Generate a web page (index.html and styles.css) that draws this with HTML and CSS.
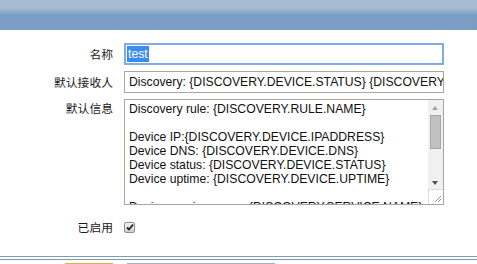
FILE: index.html
```html
<!DOCTYPE html>
<html>
<head>
<meta charset="utf-8">
<link rel="stylesheet" href="styles.css">
</head>
<body>
<div class="header"></div>
<div class="form">
  <label class="lbl lbl-name">名称</label>
  <div class="input focused"><span class="sel">test</span></div>

  <label class="lbl">默认接收人</label>
  <div class="input">Discovery: {DISCOVERY.DEVICE.STATUS} {DISCOVERY.DEVICE.IPADDRESS}</div>

  <label class="lbl lbl-top">默认信息</label>
  <div class="textarea">
    <div class="ta-text">
      <div class="line">Discovery rule: {DISCOVERY.RULE.NAME}</div>
      <div class="line">&nbsp;</div>
      <div class="line">Device IP:{DISCOVERY.DEVICE.IPADDRESS}</div>
      <div class="line">Device DNS: {DISCOVERY.DEVICE.DNS}</div>
      <div class="line">Device status: {DISCOVERY.DEVICE.STATUS}</div>
      <div class="line">Device uptime: {DISCOVERY.DEVICE.UPTIME}</div>
      <div class="line">&nbsp;</div>
      <div class="line">Device service name: {DISCOVERY.SERVICE.NAME}</div>
    </div>
    <div class="scrollbar">
      <div class="arrow up"></div>
      <div class="track"><div class="thumb"></div></div>
      <div class="arrow down"></div>
      <div class="corner">
        <svg width="15" height="15" viewBox="0 0 15 15"><path d="M12 6 L6 12 M12 9 L9 12" stroke="#9a9a9a" stroke-width="1" fill="none"/></svg>
      </div>
    </div>
  </div>

  <label class="lbl lbl-check">已启用</label>
  <div class="check-row"><span class="checkbox"><svg width="8" height="8" viewBox="0 0 8 8"><path d="M1 4.5 L3 6.5 L7 1.5" stroke="#222" stroke-width="1.8" fill="none"/></svg></span></div>
</div>
<div class="footer">
  <div class="rule"></div>
  <div class="rule"></div>
  <div class="buttons">
    <span class="btn-orange"></span>
    <span class="btn-blue"></span>
  </div>
</div>
</body>
</html>
```
FILE: styles.css
```css
html, body {
  margin: 0;
  padding: 0;
  background: #ffffff;
  font-family: "Liberation Sans", Arial, "Noto Sans CJK SC", sans-serif;
  font-size: 12.2px;
  color: #000;
  overflow: hidden;
}
.header {
  height: 30px;
  background: linear-gradient(#a7bcd4 0, #a7bcd4 8px, #7b9ec4 15px, #7a9dc3 100%);
}
.form {
  display: grid;
  grid-template-columns: 113px 320px;
  column-gap: 11px;
  row-gap: 6px;
  margin-top: 13px;
  align-items: center;
}
.lbl {
  text-align: right;
  font-family: "Noto Sans CJK SC", sans-serif;
  font-size: 11.8px;
  line-height: 16px;
  color: #1a1a1a;
}
.lbl-top {
  align-self: start;
  padding-top: 1px;
}
.input {
  box-sizing: border-box;
  height: 22px;
  border: 1px solid #a8a79e;
  padding: 2px 3px 0 4px;
  line-height: 16px;
  white-space: nowrap;
  overflow: hidden;
  color: #111;
}
.input.focused {
  border: 2px solid #82aae6;
  padding: 1px 2px 0 1px;
}
.sel {
  background: #3b8cf0;
  color: #fff;
  display: inline-block;
  line-height: 16px;
  padding: 0 1px;
}
.textarea {
  box-sizing: border-box;
  height: 106px;
  border: 1px solid #a8a79e;
  display: flex;
  overflow: hidden;
}
.ta-text {
  flex: 1;
  padding: 2px 4px 0 4px;
  overflow: hidden;
  color: #111;
}
.line {
  line-height: 14px;
  white-space: nowrap;
}
.scrollbar {
  width: 15px;
  background: #f0f0f0;
  display: flex;
  flex-direction: column;
}
.arrow {
  height: 13px;
  position: relative;
}
.arrow::after {
  content: "";
  position: absolute;
  left: 4px;
  width: 0;
  height: 0;
  border-left: 3.5px solid transparent;
  border-right: 3.5px solid transparent;
}
.arrow.up::after {
  top: 6px;
  border-bottom: 4px solid #a3a3a3;
}
.arrow.down::after {
  top: 5px;
  border-top: 4px solid #505050;
}
.track {
  flex: 1;
  padding: 2px 2px;
}
.thumb {
  box-sizing: border-box;
  height: 34px;
  background: #c1c1c1;
  border: 1px solid #a8a8a8;
}
.corner {
  height: 15px;
  background: #fff;
  border-left: 1px solid #dcdcdc;
  border-top: 1px solid #dcdcdc;
  box-sizing: border-box;
}
.corner svg {
  display: block;
}
.check-row {
  margin-top: 8px;
  height: 11px;
  display: flex;
  align-items: center;
}
.lbl-check {
  margin-top: 8px;
}
.checkbox {
  box-sizing: border-box;
  width: 11px;
  height: 11px;
  border: 1px solid #8f8f8f;
  border-radius: 2px;
  background: linear-gradient(#f4f4f4, #cfcfcf);
  display: flex;
  align-items: center;
  justify-content: center;
}
.checkbox svg {
  display: block;
}
.footer {
  margin-top: 21px;
}
.rule {
  height: 1px;
  background: #7f9bb9;
  margin-bottom: 2px;
}
.buttons {
  display: flex;
  margin-top: 3px;
  padding-left: 65px;
  gap: 14px;
}
.btn-orange {
  width: 48px;
  height: 4px;
  background: #f0a945;
}
.btn-blue {
  width: 148px;
  height: 4px;
  background: #9cb1c9;
}
```
